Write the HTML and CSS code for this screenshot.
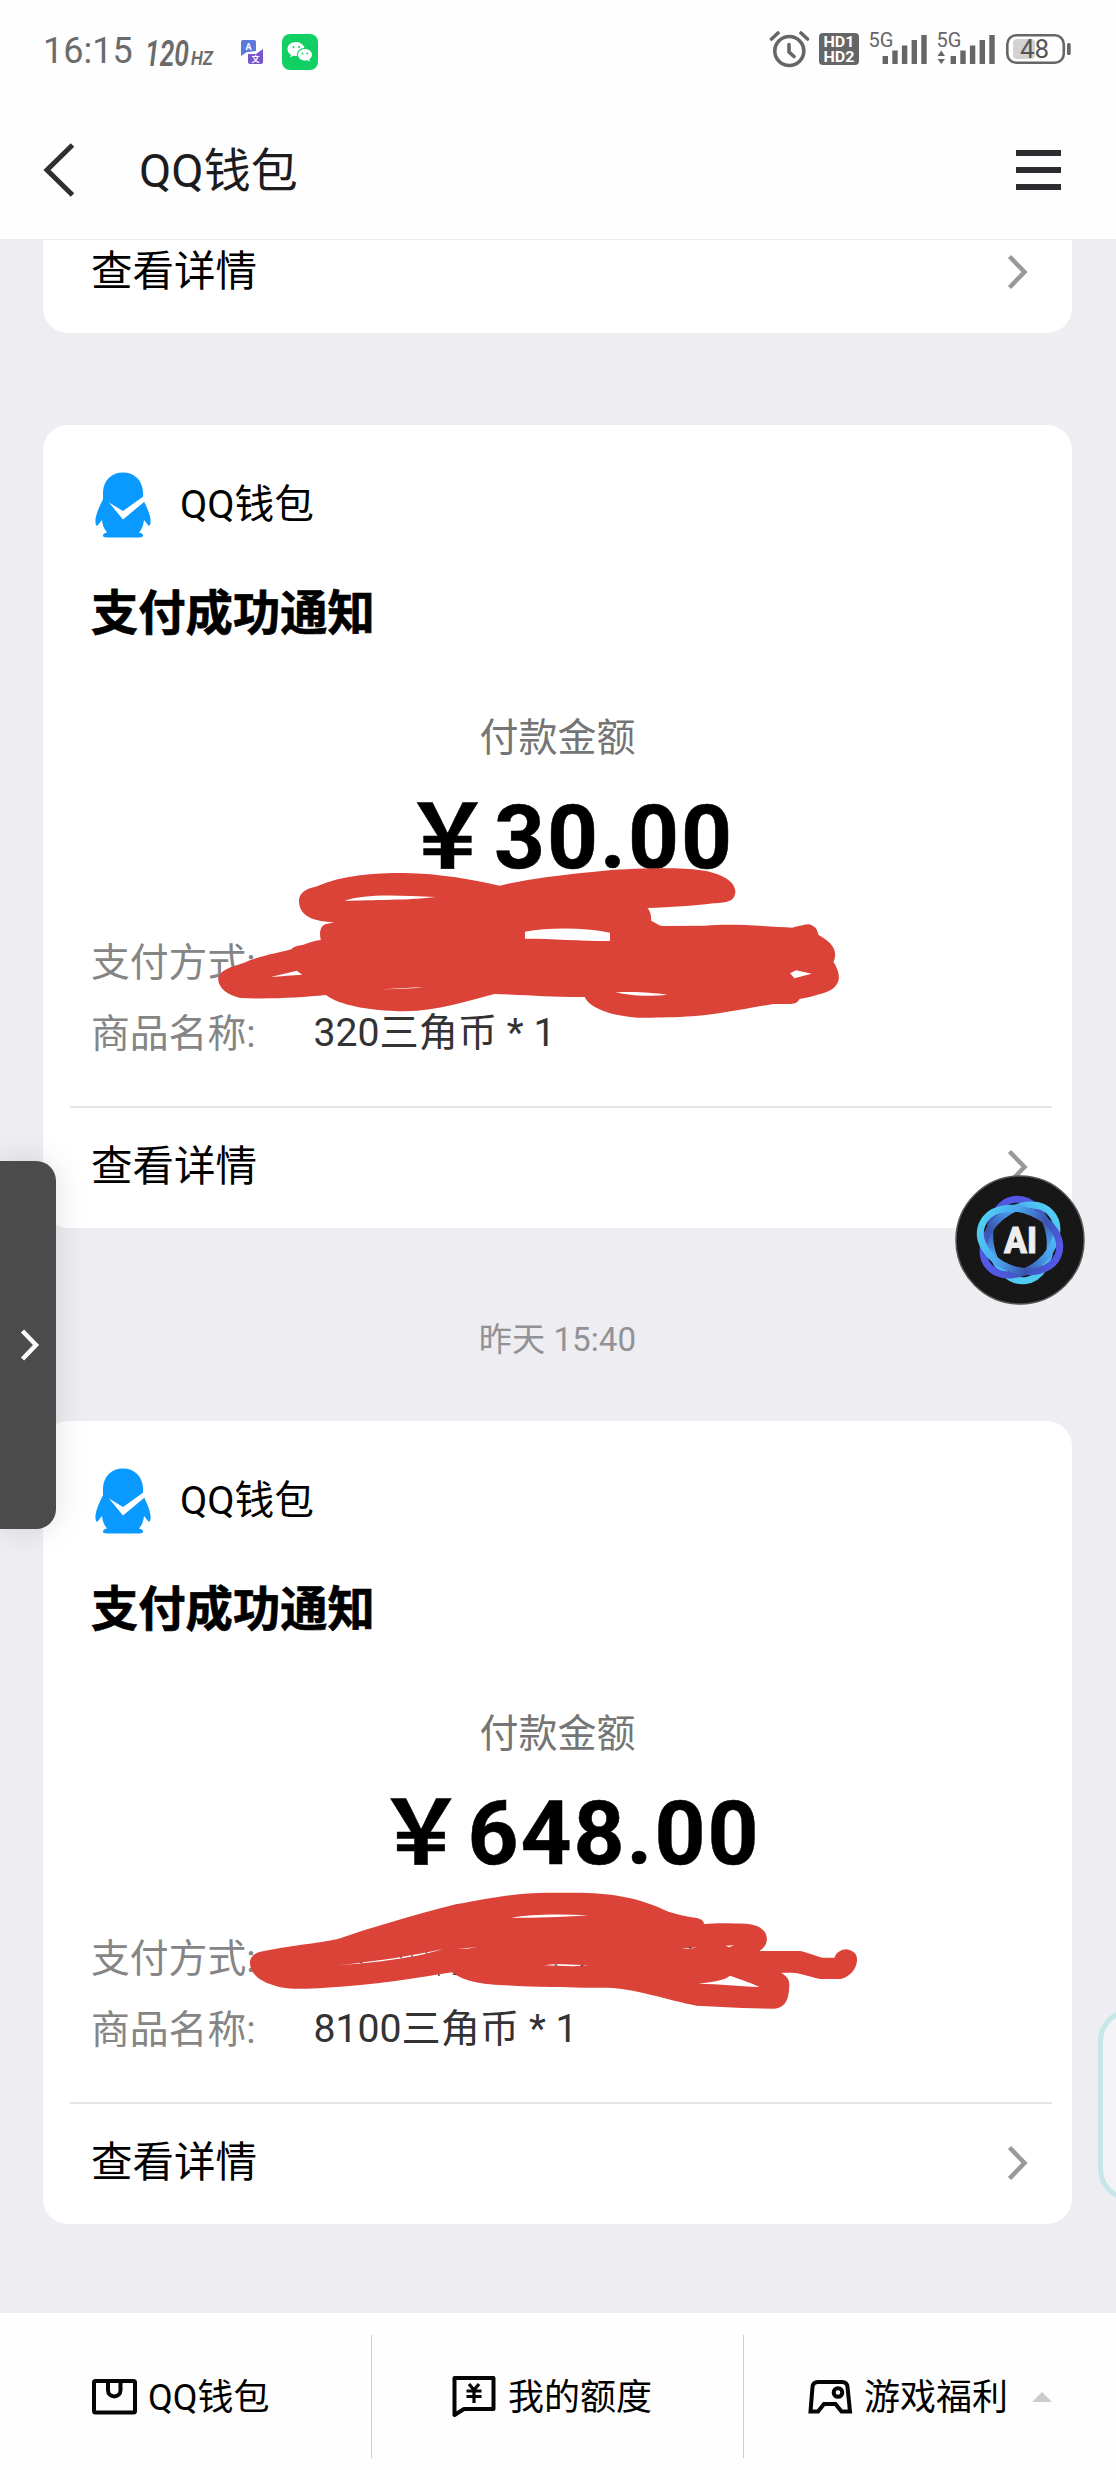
FILE: index.html
```html
<!DOCTYPE html>
<html lang="zh-CN">
<head>
<meta charset="utf-8">
<title>QQ钱包</title>
<link rel="stylesheet" href="styles.css">
</head>
<body>
<svg width="0" height="0" class="defs">
  <symbol id="chevron" viewBox="0 0 24 40"><path d="M3.500 4.500 18.500 20 3.500 35.500" fill="none" stroke="currentColor" stroke-width="4.500"/></symbol>
  <symbol id="penguin" viewBox="0 0 56 66">
    <path fill="#0a99ff" d="M28 .5C39 .5 47.500 8 48 20V27C49.500 31 54 38 55.500 47 56 52 54.500 55 53 53L49 48C48.500 53 47 57 44 60.500 49 61.500 50 65.500 44 65.500H12C6 65.500 7 61.500 12 60.500 9 57 7.500 53 7 48L3 53C1.500 55 0 52 .5 47 2 38 6.500 31 8 27V20C8.500 8 17 .5 28 .5Z"/>
    <path fill="#fff" d="M14 30.500 28 39 49 24V30L28 47.500Z"/>
  </symbol>
</svg>
<div class="screen">
  <header class="top">
    <div class="status">
      <div class="status-left">
        <span class="time">16:15</span>
        <svg class="hz" width="80" height="54"><text x="4" y="42" font-size="36" textLength="44" lengthAdjust="spacingAndGlyphs">120</text><text x="50" y="41" font-size="20" textLength="22" lengthAdjust="spacingAndGlyphs">HZ</text></svg>
        <svg class="trans" width="24" height="26" viewBox="0 0 24 26"><path fill="#5b78dc" d="M2 0H13Q15 0 15 2V11L6 12 0 16V2Q0 0 2 0Z"/><path fill="#7a55d0" d="M7 14H15L22 9V22Q22 24 20 24H9Q7 24 7 22Z"/><text x="4.500" y="9.500" font-size="9" font-weight="700" fill="#fff">A</text><text x="10.500" y="22" font-size="8" font-weight="700" fill="#fff">文</text></svg>
        <svg class="wechat" width="36" height="36" viewBox="0 0 36 36"><rect width="36" height="36" rx="8" fill="#10d064"/><path fill="#fff" d="M14 8C9 8 5.500 11 5.500 15 5.500 17.500 6.700 19.500 9 20.800L8 23.500 11.300 21.700 15 22C14.500 17 18 14 22.500 14 21.500 10.500 18 8 14 8Z"/><path fill="#fff" d="M23 15C19 15 16 17.500 16 20.700 16 24 19 26.500 23 26.500L25.500 26.200 28 27.600 27.300 25.200C29 24 30 22.500 30 20.700 30 17.500 27 15 23 15Z"/><g fill="#10d064"><circle cx="11.500" cy="13" r="1"/><circle cx="17" cy="13" r="1"/><circle cx="20.500" cy="19.500" r=".9"/><circle cx="25.200" cy="19.500" r=".9"/></g></svg>
      </div>
      <svg class="status-right" width="304" height="48" viewBox="0 -10 304 48">
        <g fill="none" stroke="#666" stroke-width="3.600" stroke-linecap="round"><circle cx="20.300" cy="21" r="14.500"/><path d="M20 14.500V22L25 26.500M2.500 9 9 3M38.500 9 32 3"/></g>
        <rect x="50" y="3" width="40" height="32" rx="4" fill="#666"/>
        <g fill="#fff" font-weight="700" font-size="15"><text x="54.500" y="17" textLength="31" lengthAdjust="spacingAndGlyphs">HD1</text><text x="54.500" y="31.500" textLength="31" lengthAdjust="spacingAndGlyphs">HD2</text></g>
        <g fill="#666" font-size="20"><text x="99.500" y="16.500">5G</text><text x="167.500" y="16.500">5G</text></g>
        <path stroke="#666" stroke-width="5.400" d="M116.300 34V26M126 34V20.500M135.600 34V15.500M145.300 34V10M155 34V5M184.300 34V26M194 34V20.500M203.600 34V15.500M213.300 34V10M223 34V5"/>
        <path fill="#666" d="M168.500 26 172.300 20.500 176 26ZM168.500 29H176L172.300 34Z"/>
        <rect x="244" y="9" width="22" height="20" rx="4" fill="#d2d2d2"/>
        <rect x="238.300" y="5.300" width="56.500" height="27.500" rx="9" fill="none" stroke="#666" stroke-width="2.600"/><rect x="298" y="13" width="3.700" height="12" rx="1.500" fill="#666"/>
        <text x="251" y="28.300" font-size="26" fill="#555">48</text>
      </svg>
    </div>
    <nav class="nav">
      <svg class="back" width="34" height="56" viewBox="0 0 34 56"><path d="M31.500 3 6 28 31.500 53" fill="none" stroke="#2e2e33" stroke-width="5"/></svg>
      <h1>QQ钱包</h1>
      <div class="menu"><i></i><i></i><i></i></div>
    </nav>
  </header>

  <main class="feed">
    <section class="card card-tail"><div class="more"><span>查看详情</span><svg class="chev"><use href="#chevron"/></svg></div></section>

    <section class="card">
      <div class="sender"><svg class="penguin"><use href="#penguin"/></svg><span>QQ钱包</span></div>
      <h2>支付成功通知</h2>
      <div class="caption">付款金额</div>
      <div class="amount"><span class="yen">￥</span>30.00</div>
      <dl><dt>支付方式:</dt><dd></dd><dt>商品名称:</dt><dd>320三角币 * 1</dd></dl>
      <div class="more ruled"><span>查看详情</span><svg class="chev"><use href="#chevron"/></svg></div>
      <svg class="scribble first" viewBox="0 0 1568 1140" preserveAspectRatio="none">
        <path fill="#dc4338" d="M235 630C237 605 255 595 275 590C340 555 410 549 485 549C570 550 650 570 712 587C800 560 900 550 960 542C1050 534 1140 532 1190 541C1240 550 1272 575 1272 605C1270 635 1255 636 1220 640C1170 648 1120 652 1063 654C1070 665 1072 675 1072 692C1085 700 1090 707 1100 708L1200 707C1260 700 1350 709 1408 713C1425 707 1440 703 1447 703C1462 708 1467 720 1469 734C1490 750 1509 765 1509 795C1509 805 1506 812 1505 816C1515 835 1518 850 1518 865C1515 890 1500 903 1480 910C1450 922 1430 925 1424 928C1418 941 1410 942 1400 942H1362C1300 955 1230 973 1170 979C1120 983 1060 984 1040 983C980 978 925 955 914 921C840 922 780 915 700 912C640 930 570 962 485 964C400 962 330 945 299 915C240 922 170 928 95 924C65 915 43 895 43 865C48 840 70 832 105 818C140 798 190 788 217 778C225 765 240 768 250 762C265 755 278 752 287 750C283 730 285 705 300 702L320 697C285 694 235 690 235 630Z"/>
        <path fill="#fff" d="M343 633C390 610 470 616 560 621C500 631 410 629 343 633ZM772 725C830 712 910 712 974 728V753C900 753 840 746 772 746ZM168 861 230 842 243 854C220 855 190 859 168 861ZM435 898 530 891C500 898 460 896 435 898ZM987 907C1040 904 1070 908 1110 914C1070 920 1020 918 987 907ZM1402 850 1416 841 1453 851 1412 865Z"/>
      </svg>
    </section>

    <time class="stamp">昨天 15:40</time>

    <section class="card">
      <div class="sender"><svg class="penguin"><use href="#penguin"/></svg><span>QQ钱包</span></div>
      <h2>支付成功通知</h2>
      <div class="caption">付款金额</div>
      <div class="amount"><span class="yen">￥</span>648.00</div>
      <dl><dt>支付方式:</dt><dd></dd><dt>商品名称:</dt><dd>8100三角币 * 1</dd></dl>
      <div class="more ruled"><span>查看详情</span><svg class="chev"><use href="#chevron"/></svg></div>
      <svg class="scribble second" viewBox="0 0 1568 1140" preserveAspectRatio="none">
        <path fill="#dc4338" d="M115 725C118 705 130 698 145 694C200 678 270 670 320 656C390 625 480 590 590 553C680 530 740 518 800 518H880C960 522 1010 532 1080 575C1110 587 1130 590 1148 595C1160 600 1162 606 1162 612C1190 608 1230 610 1260 611C1295 616 1308 635 1307 660C1305 680 1297 685 1290 693H1385C1405 700 1420 708 1435 713H1463C1467 697 1480 688 1490 688C1510 692 1516 705 1515 723C1512 750 1500 768 1478 777H1430C1400 768 1380 758 1365 758H1340C1355 770 1359 780 1359 795C1358 840 1350 862 1325 866L1250 864 1145 857C1080 840 1000 805 940 803C860 804 760 800 690 795C630 792 600 775 580 757C500 775 400 795 290 803C240 808 210 808 180 800C135 785 115 760 115 725Z"/>
        <path fill="#fff" d="M718 594C760 582 830 582 895 586C830 592 770 593 718 594ZM1150 791C1180 785 1208 783 1222 767C1250 780 1270 788 1290 801C1240 798 1200 792 1150 791ZM315 736C400 725 480 710 560 687C500 713 400 729 315 736ZM793 736 820 732 896 736 860 739ZM594 687 640 681 615 686ZM1110 687 1145 682 1130 687ZM1212 677 1232 676 1220 682Z"/>
        <path stroke="#222" stroke-width="3" d="M370 728h4M462 712h4M487 708h4M520 699h4M817 735h7M878 737h6M1127 684h7M551 763v5M583 763h7"/>
      </svg>
    </section>
  </main>

  <footer class="tabs">
    <div class="tab"><svg width="46" height="44" viewBox="0 0 46 44"><g fill="none" stroke="#050505" stroke-width="4"><rect x="3" y="6" width="41" height="31.500" rx="1.500"/><path d="M17 6V15C17 23.500 29.500 23.500 29.500 15V6"/></g></svg><span>QQ钱包</span></div>
    <div class="tab"><svg width="46" height="44" viewBox="0 0 46 44"><g fill="none" stroke="#050505" stroke-width="4" stroke-linejoin="round"><path d="M3.500 3H42.500V34H13L3.500 40Z"/><path stroke-width="3.200" d="M18 9 23 15 28 9M15.500 16H30.500M15.500 21.500H30.500M23 15V28"/></g></svg><span>我的额度</span></div>
    <div class="tab"><svg width="46" height="44" viewBox="0 0 46 44"><g fill="none" stroke="#050505" stroke-width="4"><path d="M3.500 36.500 5.500 12Q6 7 11 7H35Q40 7 40.500 12L43 36.500H34.500L28.500 29H17L11 36.500Z"/><circle cx="31" cy="17.500" r="4.300"/></g></svg><span>游戏福利</span><svg class="tri" width="20" height="10"><path d="M0 10 10 0 20 10Z" fill="#ccc"/></svg></div>
  </footer>

  <div class="drawer"><svg width="20" height="34" viewBox="0 0 20 34"><path d="M2.500 3 16 17 2.500 31" fill="none" stroke="#fff" stroke-width="4.500"/></svg></div>
  <div class="edge-panel"></div>
  <div class="ai">
    <svg width="130" height="130" viewBox="-65 -65 130 130">
      <defs>
        <linearGradient id="glow" x1="0" x2="1"><stop offset="0" stop-color="#5458e8"/><stop offset=".3" stop-color="#3a55b0"/><stop offset=".65" stop-color="#4aa4f0"/><stop offset="1" stop-color="#50ccf2"/></linearGradient>
      </defs>
      <circle r="64" fill="#171717" stroke="#555" stroke-width="1.500"/>
      <g fill="none" stroke="url(#glow)" stroke-width="7"><ellipse rx="41" ry="30" transform="rotate(82)"/><ellipse rx="41" ry="30" transform="rotate(-40)"/><ellipse rx="41" ry="30" transform="rotate(202)"/></g>
      <text x="-16" y="13" font-size="37" font-weight="800" fill="#eee" stroke="#eee" textLength="33" lengthAdjust="spacingAndGlyphs">AI</text>
    </svg>
  </div>
</div>
</body>
</html>
```

FILE: styles.css
```css
* { box-sizing: border-box; margin: 0; padding: 0; }
body { font-family: Roboto, "Noto Sans CJK SC", sans-serif; color: #000; background: #ededf2; }
svg { display: block; flex: none; }
.defs { position: absolute; }
.screen { position: relative; width: 1116px; height: 2480px; display: flex; flex-direction: column; overflow: hidden; background: #ededf2; }

.top { height: 240px; background: #fefefe; border-bottom: 1px solid #ececee; flex: none; }
.status { height: 100px; padding: 0 43px 0 43px; display: flex; justify-content: space-between; }
.status-left { display: flex; }
.time { font-size: 36px; line-height: 44px; color: #6b6b6b; margin-top: 29px; width: 98px; }
.hz { margin-top: 24px; fill: #6b6b6b; font-style: italic; font-weight: 600; }
.trans { margin: 40px 0 0 20px; }
.wechat { margin: 34px 0 0 17px; }
.status-right { margin: 20px 0 0; }
.nav { display: flex; align-items: center; height: 139px; padding: 0 55px 0 41px; }
.back { width: 34px; }
.nav h1 { flex: 1; margin-left: 64px; padding-top: 2px; font-size: 47px; font-weight: 400; line-height: 60px; color: #1c1c1e; }
.menu { width: 45px; display: grid; gap: 11px; }
.menu i { height: 6px; background: #2c2c31; }

.feed { flex: 1; padding: 0 44px 0 43px; display: flex; flex-direction: column; }
.card { position: relative; flex: none; height: 803px; padding: 0 20px 0 27px; background: #fff; border-radius: 25px; margin-bottom: 89px; }
.card-tail { height: 93px; border-radius: 0 0 25px 25px; margin-bottom: 92px; }
.more { display: flex; justify-content: space-between; align-items: center; height: 118px; padding: 1px 22px 0 21px; font-size: 41.5px; }
.more span { padding-bottom: 8px; }
.card-tail .more { height: 62px; }
.ruled { border-top: 2px solid #e5e5e5; }
.chev { width: 24px; height: 40px; color: #999; }
.sender { display: flex; align-items: center; height: 66px; margin-top: 47px; padding-left: 25px; font-size: 39.7px; }
.sender span { padding-bottom: 9px; }
.penguin { width: 56px; height: 66px; margin-right: 29px; }
.card h2 { padding-left: 21px; margin-top: 46px; height: 60px; line-height: 60px; font-size: 47.3px; font-weight: 700; -webkit-text-stroke: .7px #000; }
.caption { margin-top: 64px; height: 60px; line-height: 60px; padding-right: 7px; text-align: center; font-size: 39px; color: #757575; }
.amount { height: 90px; line-height: 90px; margin-top: 17px; padding-left: 15px; text-align: center; font-size: 89px; font-weight: 700; letter-spacing: 2px; -webkit-text-stroke: .5px #000; }
.yen { font-family: "Noto Sans CJK SC", sans-serif; }
dl { display: grid; grid-template-columns: 222.5px 1fr; grid-auto-rows: 71px; line-height: 71px; margin-top: 52px; padding-left: 21px; font-size: 39.2px; height: 179px; }
dt { color: #858585; font-size: 38.8px; }
dd { color: #333; }
.stamp { height: 60px; line-height: 60px; margin: -7px 0 51px; text-align: center; font-size: 33.2px; color: #929295; }
.scribble { position: absolute; left: 157px; }
.first { top: 265px; width: 660px; height: 380px; }
.second { top: 299px; width: 680px; height: 380px; }

.tabs { position: relative; height: 167px; flex: none; background: #fefefe; display: grid; grid-template-columns: repeat(3, 1fr); font-size: 36px; }
.tab { display: flex; align-items: center; padding-left: 91px; margin: 22px 0; border-right: 1px solid #ccc; }
.tab:nth-child(2) { padding-left: 79px; }
.tab:last-child { padding-left: 63px; border: 0; }
.tab span { margin-left: 11px; padding-bottom: 6px; }
.tri { margin-left: 24px; }

.drawer { position: absolute; left: 0; top: 1161px; width: 56px; height: 368px; border-radius: 0 20px 20px 0; background: #4b4b4b; box-shadow: 0 0 32px rgba(0,0,0,.12); display: flex; align-items: center; padding-left: 20px; }
.edge-panel { position: absolute; left: 1098px; top: 2009px; width: 80px; height: 192px; border: 5px solid #c6e6e8; border-radius: 32px; background: #f3f3f5; }
.ai { position: absolute; left: 955px; top: 1175px; }
```
